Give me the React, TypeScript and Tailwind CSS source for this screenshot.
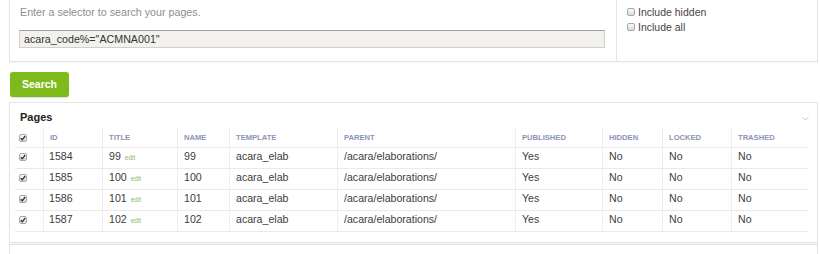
import React from "react";

type Page = { id: number; title: string; name: string };

const pages: Page[] = [
  { id: 1584, title: "99", name: "99" },
  { id: 1585, title: "100", name: "100" },
  { id: 1586, title: "101", name: "101" },
  { id: 1587, title: "102", name: "102" },
];

function Box({ checked }: { checked?: boolean }) {
  return (
    <span className="inline-flex w-[8px] h-[8px] items-center justify-center rounded-[2px] border border-[#a8a8a8] bg-gradient-to-b from-[#fbfbfb] to-[#d8d8d8]">
      {checked && (
        <svg width="6" height="6" viewBox="0 0 6 6">
          <path d="M0.8 3.2 L2.3 4.8 L5.2 1" fill="none" stroke="#333" strokeWidth="1.3" />
        </svg>
      )}
    </span>
  );
}

const cols = ["w-[29px]", "w-[59px]", "w-[75px]", "w-[52px]", "w-[108px]", "w-[178px]", "w-[87px]", "w-[60px]", "w-[69px]", "w-[76px]"];
const heads = ["ID", "TITLE", "NAME", "TEMPLATE", "PARENT", "PUBLISHED", "HIDDEN", "LOCKED", "TRASHED"];

export default function App() {
  return (
    <div className="w-[820px] h-[254px] overflow-hidden bg-white font-['Liberation_Sans',Arial,sans-serif] text-[#3c3c3c]">
      {/* selector panel */}
      <div className="ml-[9px] w-[809px] h-[62px] flex border border-t-0 border-[#e4e4e4] shadow-[0_1px_1px_rgba(0,0,0,0.04)]">
        <div className="w-[606px] pl-[9px] pt-[6px]">
          <p className="pl-[1px] text-[10.7px] leading-[13px] text-[#8e8e8e]">Enter a selector to search your pages.</p>
          <div className="mt-[11px] w-[586px] h-[18px] border border-[#cfcfcf] border-t-[#9f9f9f] bg-[#f2f1ee] pl-[4px] text-[10.7px] leading-[16px] text-[#333]">
            acara_code%="ACMNA001"
          </div>
        </div>
        <div className="flex-1 border-l border-[#e4e4e4] pl-[10px] pt-[6px] flex flex-col gap-[3px] text-[10.5px] leading-[12px] text-[#444]">
          <label className="flex items-center gap-[3px]"><Box />Include hidden</label>
          <label className="flex items-center gap-[3px]"><Box />Include all</label>
        </div>
      </div>

      <button className="mt-[10px] ml-[10px] w-[59px] h-[25px] rounded-[3px] bg-[#7fba1d] text-white font-bold text-[10.5px] shadow-[0_1px_1px_rgba(0,0,0,0.15)]">
        Search
      </button>

      {/* pages panel */}
      <div className="mt-[5px] ml-[9px] w-[809px] h-[141px] border border-[#e4e4e4] px-[5px] shadow-[0_1px_1px_rgba(0,0,0,0.04)]">
        <div className="h-[25px] flex items-center justify-between pl-[5px] pr-[3px] pt-[3px]">
          <span className="font-bold text-[11px] text-[#222]">Pages</span>
          <svg width="7" height="5" viewBox="0 0 7 5" className="mt-[2px]">
            <path d="M0.5 1 L3.5 4 L6.5 1" fill="none" stroke="#c4c4c4" strokeWidth="1" />
          </svg>
        </div>
        <div className="w-[793px]">
          <div className="flex h-[20px] border-b border-[#e9e9e9]">
            <div className={`${cols[0]} flex items-center pl-[4px] border-r border-[#eeeeee]`}><Box checked /></div>
            {heads.map((h, i) => (
              <div key={h} className={`${cols[i + 1]} flex items-center pl-[6px] text-[7.6px] font-bold text-[#8b93b6] ${i < heads.length - 1 ? "border-r border-[#eeeeee]" : ""}`}>
                {h}
              </div>
            ))}
          </div>
          {pages.map(p => (
            <div key={p.id} className="flex h-[21px] border-b border-[#e9e9e9] text-[10.6px]">
              <div className={`${cols[0]} flex items-center pl-[4px] pb-[2px] border-r border-[#eeeeee]`}><Box checked /></div>
              <div className={`${cols[1]} flex items-center pl-[5px] pb-[2px] border-r border-[#eeeeee]`}>{p.id}</div>
              <div className={`${cols[2]} flex items-center pl-[6px] pb-[2px] border-r border-[#eeeeee]`}>
                {p.title}
                <span className="ml-[4px] mt-[2px] text-[6.5px] text-[#8db86a]">edit</span>
              </div>
              <div className={`${cols[3]} flex items-center pl-[6px] pb-[2px] border-r border-[#eeeeee]`}>{p.name}</div>
              <div className={`${cols[4]} flex items-center pl-[6px] pb-[2px] border-r border-[#eeeeee]`}>acara_elab</div>
              <div className={`${cols[5]} flex items-center pl-[6px] pb-[2px] border-r border-[#eeeeee]`}>/acara/elaborations/</div>
              <div className={`${cols[6]} flex items-center pl-[6px] pb-[2px] border-r border-[#eeeeee]`}>Yes</div>
              <div className={`${cols[7]} flex items-center pl-[6px] pb-[2px] border-r border-[#eeeeee]`}>No</div>
              <div className={`${cols[8]} flex items-center pl-[6px] pb-[2px] border-r border-[#eeeeee]`}>No</div>
              <div className={`${cols[9]} flex items-center pl-[6px] pb-[2px]`}>No</div>
            </div>
          ))}
        </div>
      </div>
      <div className="mt-[1px] ml-[9px] w-[809px] h-[40px] border border-[#e4e4e4]" />
    </div>
  );
}
